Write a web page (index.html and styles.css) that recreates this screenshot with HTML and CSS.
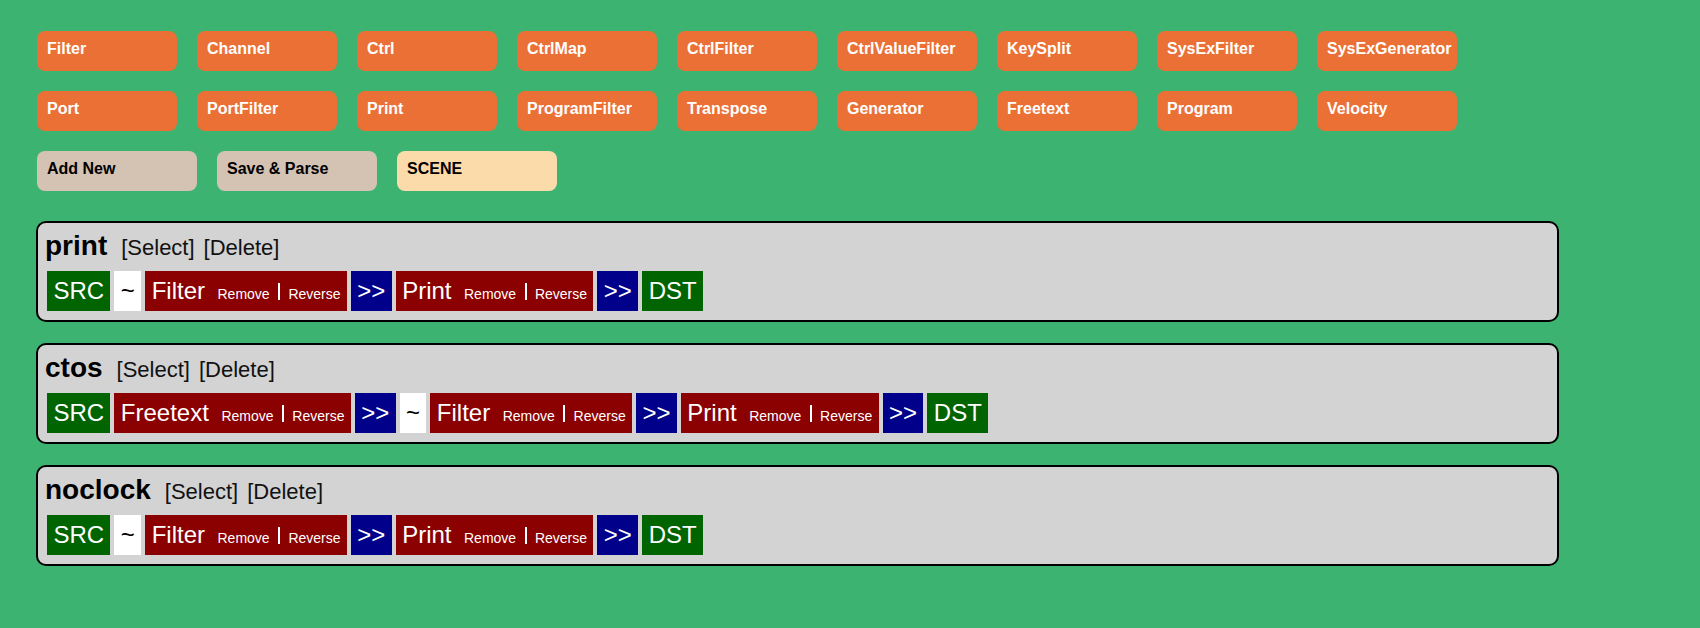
FILE: index.html
```html
<!DOCTYPE html>
<html>
<head>
<meta charset="utf-8">
<title>Scenes</title>
<link rel="stylesheet" href="styles.css">
</head>
<body>
<div class="page">
  <div class="btn-row">
    <div class="btn orange">Filter</div>
    <div class="btn orange">Channel</div>
    <div class="btn orange">Ctrl</div>
    <div class="btn orange">CtrlMap</div>
    <div class="btn orange">CtrlFilter</div>
    <div class="btn orange">CtrlValueFilter</div>
    <div class="btn orange">KeySplit</div>
    <div class="btn orange">SysExFilter</div>
    <div class="btn orange">SysExGenerator</div>
  </div>
  <div class="btn-row">
    <div class="btn orange">Port</div>
    <div class="btn orange">PortFilter</div>
    <div class="btn orange">Print</div>
    <div class="btn orange">ProgramFilter</div>
    <div class="btn orange">Transpose</div>
    <div class="btn orange">Generator</div>
    <div class="btn orange">Freetext</div>
    <div class="btn orange">Program</div>
    <div class="btn orange">Velocity</div>
  </div>
  <div class="btn-row">
    <div class="btn action">Add New</div>
    <div class="btn action">Save &amp; Parse</div>
    <div class="btn action scene">SCENE</div>
  </div>

  <div class="scenes">
    <div class="box">
      <div class="title"><span class="name">print</span><span class="link first">[Select]</span><span class="link">[Delete]</span></div>
      <div class="chain">
        <span class="item port">SRC</span>
        <span class="item tilde">~</span>
        <span class="item node">Filter<span class="small first">Remove</span><span class="sep"></span><span class="small">Reverse</span></span>
        <span class="item arrow">&gt;&gt;</span>
        <span class="item node">Print<span class="small first">Remove</span><span class="sep"></span><span class="small">Reverse</span></span>
        <span class="item arrow">&gt;&gt;</span>
        <span class="item port">DST</span>
      </div>
    </div>
    <div class="box">
      <div class="title"><span class="name">ctos</span><span class="link first">[Select]</span><span class="link">[Delete]</span></div>
      <div class="chain">
        <span class="item port">SRC</span>
        <span class="item node">Freetext<span class="small first">Remove</span><span class="sep"></span><span class="small">Reverse</span></span>
        <span class="item arrow">&gt;&gt;</span>
        <span class="item tilde">~</span>
        <span class="item node">Filter<span class="small first">Remove</span><span class="sep"></span><span class="small">Reverse</span></span>
        <span class="item arrow">&gt;&gt;</span>
        <span class="item node">Print<span class="small first">Remove</span><span class="sep"></span><span class="small">Reverse</span></span>
        <span class="item arrow">&gt;&gt;</span>
        <span class="item port">DST</span>
      </div>
    </div>
    <div class="box">
      <div class="title"><span class="name">noclock</span><span class="link first">[Select]</span><span class="link">[Delete]</span></div>
      <div class="chain">
        <span class="item port">SRC</span>
        <span class="item tilde">~</span>
        <span class="item node">Filter<span class="small first">Remove</span><span class="sep"></span><span class="small">Reverse</span></span>
        <span class="item arrow">&gt;&gt;</span>
        <span class="item node">Print<span class="small first">Remove</span><span class="sep"></span><span class="small">Reverse</span></span>
        <span class="item arrow">&gt;&gt;</span>
        <span class="item port">DST</span>
      </div>
    </div>
  </div>
</div>
</body>
</html>
```

FILE: styles.css
```css
html, body {
  margin: 0;
  padding: 0;
  background: #3cb371;
  font-family: "Liberation Sans", Arial, sans-serif;
}

.page {
  padding: 31px 0 0 36px;
}

.btn-row {
  display: flex;
  gap: 20px;
  margin-bottom: 20px;
  padding-left: 1px;
}

.btn {
  box-sizing: border-box;
  width: 140px;
  height: 40px;
  padding: 9px 10px;
  border-radius: 8px;
  font-size: 16px;
  font-weight: bold;
  white-space: nowrap;
}

.orange {
  background: #eb7035;
  color: #fff;
}

.action {
  width: 160px;
  background: #d4c2b2;
  color: #000;
}

.action.scene {
  background: #fcdbaa;
}

.scenes {
  margin-top: 30px;
}

.box {
  box-sizing: border-box;
  width: 1523px;
  border: 2px solid #000;
  border-radius: 10px;
  background: #d3d3d3;
  padding: 7px 8px 9px 7px;
  margin-bottom: 21px;
}

.title {
  height: 32px;
  line-height: 32px;
  color: #000;
  white-space: nowrap;
}

.name {
  font-size: 28px;
  font-weight: bold;
}

.link {
  font-size: 22px;
  margin-left: 9px;
  color: #111;
}

.link.first {
  margin-left: 14px;
}

.chain {
  display: flex;
  gap: 4px;
  margin-top: 9px;
  margin-left: 2px;
  height: 40px;
}

.item {
  display: inline-block;
  height: 40px;
  line-height: 40px;
  font-size: 24px;
  padding: 0 6.4px;
  color: #fff;
  white-space: nowrap;
}

.port {
  background: #006400;
}

.tilde {
  background: #fff;
  color: #000;
}

.node {
  background: #8b0000;
}

.arrow {
  background: #00008b;
}

.small {
  font-size: 14px;
  line-height: 1;
}

.small.first {
  margin-left: 12.5px;
}

.sep {
  display: inline-block;
  width: 2px;
  height: 17px;
  background: #fff;
  vertical-align: -1px;
  margin: 0 8.4px;
}
```
